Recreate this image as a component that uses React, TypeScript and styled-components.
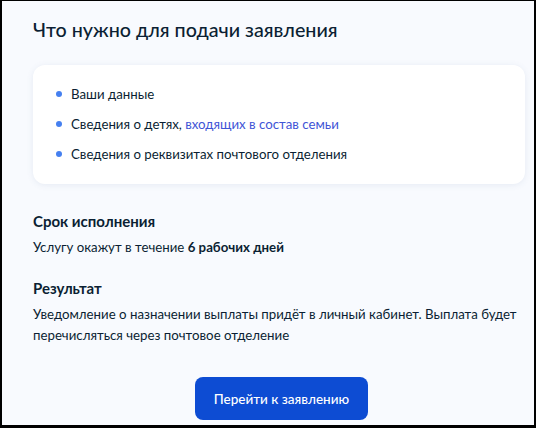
import styled, { createGlobalStyle } from 'styled-components';

const GlobalStyle = createGlobalStyle`
    body {
        margin: 0;
        font-family: Lato, "Noto Sans", sans-serif;
        color: #0b1f33;
    }
`

const Frame = styled.div`
    width: 536px;
    height: 428px;
    box-sizing: border-box;
    border-style: solid;
    border-color: #000;
    border-width: 1px 2px 3px 2px;
    background: #f8fafe;
    padding: 17px 9px 0 31px;
    overflow: hidden;
`

const Title = styled.h2`
    margin: 0;
    font-size: 19.7px;
    line-height: 24px;
    font-weight: 500;
`

const Card = styled.ul`
    list-style: none;
    margin: 23px 0 0;
    padding: 19px 20px 20px 23px;
    background: #fff;
    border-radius: 12px;
    box-shadow: 0 1px 6px rgba(102, 124, 165, 0.12);
    display: flex;
    flex-direction: column;
    gap: 10px;
`

const Item = styled.li`
    display: flex;
    align-items: center;
    gap: 9px;
    font-size: 13.25px;
    line-height: 20px;

    &::before {
        content: '';
        width: 6px;
        height: 6px;
        border-radius: 50%;
        background: #4680f0;
        flex-shrink: 0;
    }
`

const TextLink = styled.a`
    color: #3f55d6;
    text-decoration: none;
`

const Section = styled.section<{ top: number }>`
    margin-top: ${p => p.top}px;
`

const Heading = styled.h3`
    margin: 0;
    font-size: 15px;
    line-height: 20px;
    font-weight: 700;
`

const Text = styled.p`
    margin: 6px 0 0;
    font-size: 13.25px;
    line-height: 21px;
`

const Actions = styled.div`
    margin-top: 31px;
    padding-left: 162px;
`

const Button = styled.button`
    width: 173px;
    height: 43px;
    border: none;
    border-radius: 8px;
    background: #0d4cd3;
    color: #fff;
    font-family: Lato, "Noto Sans", sans-serif;
    font-size: 13.5px;
    font-weight: 500;
    cursor: pointer;
`

function App() {
    return (
        <Frame>
            <GlobalStyle />
            <Title>Что нужно для подачи заявления</Title>
            <Card>
                <Item>Ваши данные</Item>
                <Item>
                    <span>
                        Сведения о детях, <TextLink href="#">входящих в состав семьи</TextLink>
                    </span>
                </Item>
                <Item>Сведения о реквизитах почтового отделения</Item>
            </Card>
            <Section top={27}>
                <Heading>Срок исполнения</Heading>
                <Text>
                    Услугу окажут в течение <b>6 рабочих дней</b>
                </Text>
            </Section>
            <Section top={20}>
                <Heading>Результат</Heading>
                <Text>
                    Уведомление о назначении выплаты придёт в личный кабинет. Выплата будет перечисляться через почтовое отделение
                </Text>
            </Section>
            <Actions>
                <Button>Перейти к заявлению</Button>
            </Actions>
        </Frame>
    )
}

export default App
